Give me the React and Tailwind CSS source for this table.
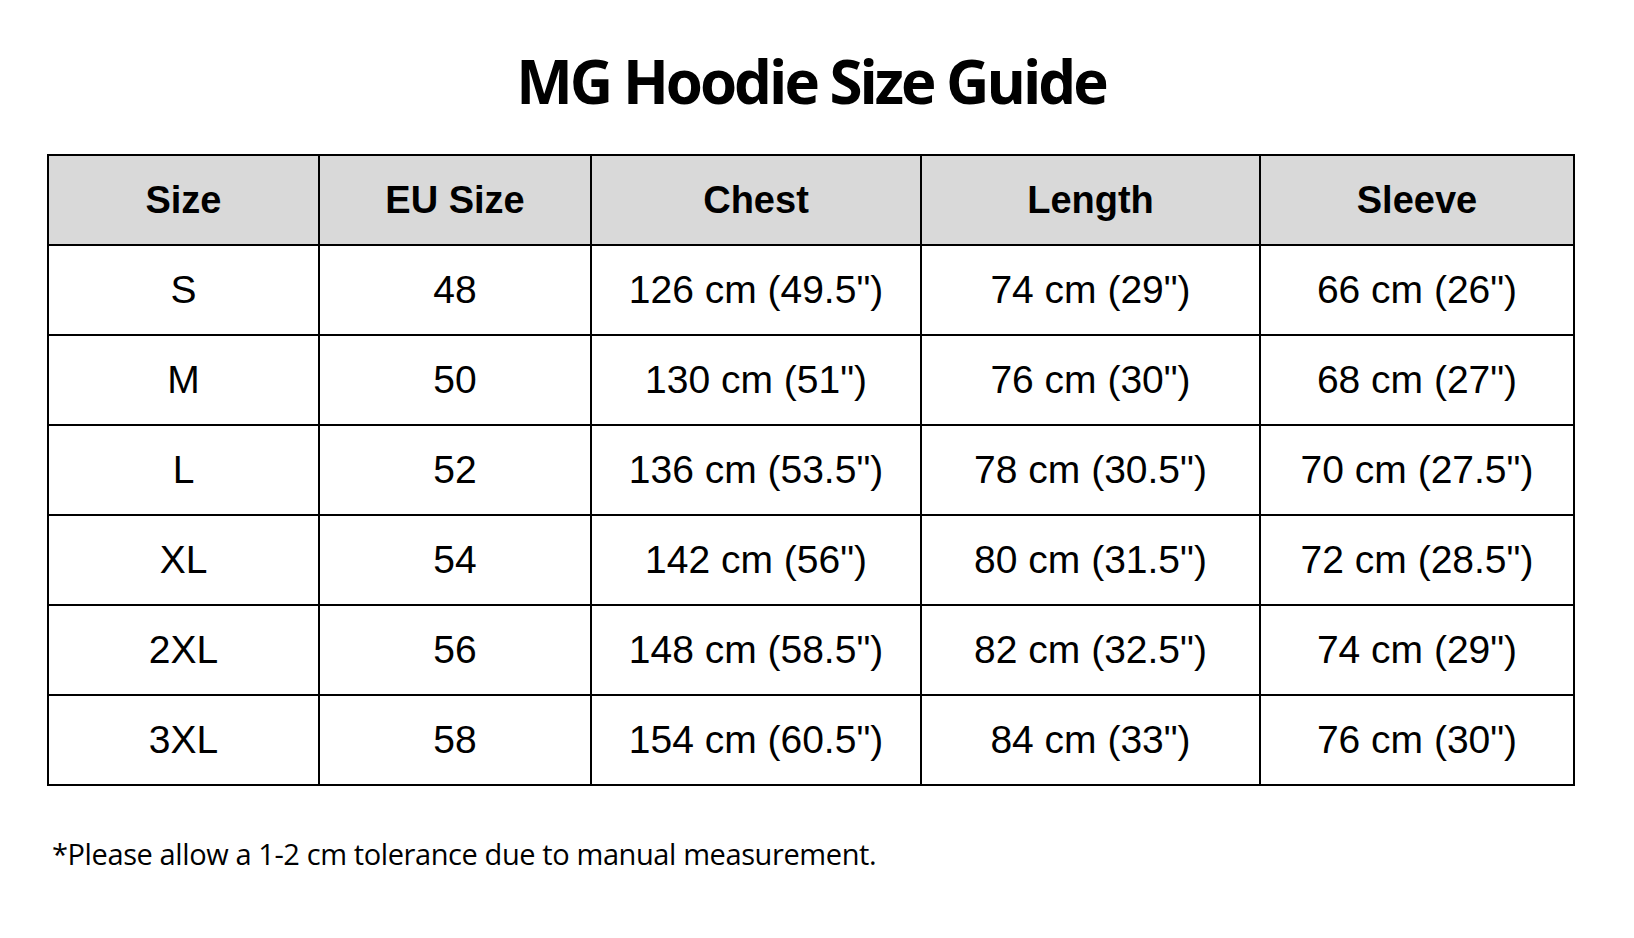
const HEADERS = ["Size", "EU Size", "Chest", "Length", "Sleeve"];

const ROWS = [
  ["S", "48", '126 cm (49.5")', '74 cm (29")', '66 cm (26")'],
  ["M", "50", '130 cm (51")', '76 cm (30")', '68 cm (27")'],
  ["L", "52", '136 cm (53.5")', '78 cm (30.5")', '70 cm (27.5")'],
  ["XL", "54", '142 cm (56")', '80 cm (31.5")', '72 cm (28.5")'],
  ["2XL", "56", '148 cm (58.5")', '82 cm (32.5")', '74 cm (29")'],
  ["3XL", "58", '154 cm (60.5")', '84 cm (33")', '76 cm (30")'],
];

const WIDTHS = ["w-[271px]", "w-[272px]", "w-[330px]", "w-[339px]", "w-[314px]"];

const App = () => {
  return (
    <div className="w-[1634px] h-[938px] bg-white text-black overflow-hidden">
      {/* title */}
      <h1
        className="pt-[40px] pr-[12px] h-[154px] text-center text-[60px] font-bold leading-[82px] tracking-[-3px]"
        style={{ fontFamily: '"Open Sans", sans-serif' }}
      >
        MG Hoodie Size Guide
      </h1>

      <div className="px-[47px]">
        <table
          className="border-collapse border-2 border-black table-fixed"
          style={{ fontFamily: '"Liberation Sans", Arial, sans-serif' }}
        >
          <thead>
            <tr className="h-[90px] bg-[#d9d9d9]">
              {HEADERS.map((h, i) => (
                <th key={h} className={`${WIDTHS[i]} border-2 border-black text-center text-[38px] font-bold`}>
                  {h}
                </th>
              ))}
            </tr>
          </thead>
          <tbody>
            {ROWS.map((row) => (
              <tr key={row[0]} className="h-[90px]">
                {row.map((c, i) => (
                  <td key={i} className="border-2 border-black text-center text-[39px]">
                    {c}
                  </td>
                ))}
              </tr>
            ))}
          </tbody>
        </table>
      </div>

      <p
        className="pl-[52px] pt-[50px] text-[29px] leading-[36px] tracking-[-0.4px]"
        style={{ fontFamily: '"Open Sans", sans-serif' }}
      >
        *Please allow a 1-2 cm tolerance due to manual measurement.
      </p>
    </div>
  );
};

export default App;
